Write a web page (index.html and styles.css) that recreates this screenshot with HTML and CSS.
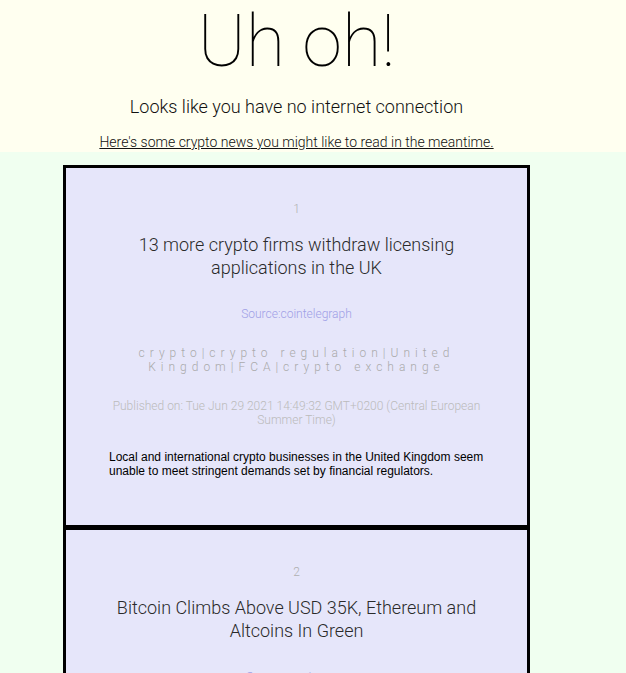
FILE: index.html
```html
<!DOCTYPE html>
<html lang="en">
<head>
<meta charset="utf-8">
<title>Uh oh!</title>
<link rel="stylesheet" href="styles.css">
</head>
<body>
<header class="hero">
  <div class="hero-inner">
    <h1 class="hero-title">Uh oh!</h1>
    <p class="hero-sub">Looks like you have no internet connection</p>
    <a class="hero-link" href="#news">Here's some crypto news you might like to read in the meantime.</a>
  </div>
</header>
<main class="content" id="news">
  <article class="card">
    <div class="card-num">1</div>
    <h2 class="card-title">13 more crypto firms withdraw licensing applications in the UK</h2>
    <div class="card-source">Source:cointelegraph</div>
    <div class="card-tags">crypto|crypto regulation|United Kingdom|FCA|crypto exchange</div>
    <div class="card-date">Published on: Tue Jun 29 2021 14:49:32 GMT+0200 (Central European Summer Time)</div>
    <p class="card-desc">Local and international crypto businesses in the United Kingdom seem unable to meet stringent demands set by financial regulators.</p>
  </article>
  <article class="card">
    <div class="card-num">2</div>
    <h2 class="card-title">Bitcoin Climbs Above USD 35K, Ethereum and Altcoins In Green</h2>
    <div class="card-source">Source:cryptonews</div>
    <div class="card-tags">bitcoin|ethereum|altcoins|market</div>
    <div class="card-date">Published on: Tue Jun 29 2021 14:30:00 GMT+0200 (Central European Summer Time)</div>
    <p class="card-desc">Bitcoin climbed above USD 35,000 while most major altcoins also traded in the green.</p>
  </article>
</main>
</body>
</html>
```
FILE: styles.css
```css
html, body {
  margin: 0;
  padding: 0;
}
body {
  background: #f0fff0;
  font-family: Roboto, "Liberation Sans", sans-serif;
  font-weight: 300;
}
.hero {
  background: #fffff0;
}
.hero-inner {
  width: 593px;
  display: flex;
  flex-direction: column;
  align-items: center;
  padding: 0 0 1px;
}
.hero-title {
  margin: 0;
  font-weight: 100;
  font-size: 72px;
  line-height: 84px;
  color: #000;
}
.hero-sub {
  margin: 12px 0 0;
  font-size: 18px;
  line-height: 22px;
  color: #111;
}
.hero-link {
  margin-top: 15px;
  font-size: 14px;
  line-height: 18px;
  color: #111;
  text-decoration: underline;
}
.content {
  width: 593px;
  padding-top: 13px;
}
.card {
  width: 467px;
  box-sizing: border-box;
  margin: 0 auto;
  border: 3px solid #000;
  background: #e6e6fa;
  padding: 33px 43px 47px;
  text-align: center;
}
.card + .card {
  margin-top: -1px;
  padding-top: 34px;
}
.card-num {
  font-size: 12px;
  line-height: 16px;
  color: #b0b0b0;
}
.card-title {
  margin: 16px 0 0;
  font-size: 18px;
  font-weight: 300;
  line-height: 23px;
  color: #2a2a2a;
}
.card-source {
  margin-top: 27px;
  font-size: 12px;
  line-height: 16px;
  color: #a0a0e6;
}
.card-tags {
  margin-top: 24px;
  font-size: 12px;
  line-height: 14px;
  letter-spacing: 5px;
  color: #aaa;
}
.card-date {
  margin-top: 25px;
  font-size: 12px;
  line-height: 14px;
  color: #bbb;
}
.card-desc {
  margin: 23px 0 0;
  text-align: left;
  font-family: "Liberation Sans", Arial, sans-serif;
  font-weight: 400;
  font-size: 12px;
  line-height: 14px;
  color: #000;
}
```
